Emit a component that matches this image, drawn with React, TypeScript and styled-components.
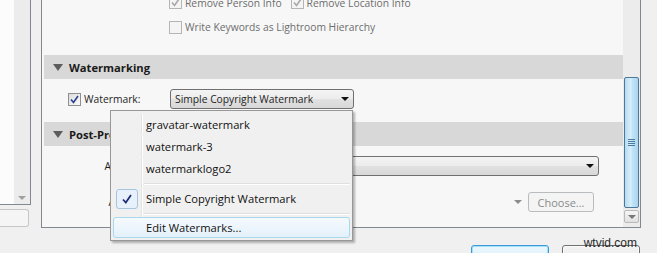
import styled, { createGlobalStyle } from 'styled-components';

const GlobalStyle = createGlobalStyle`
  html, body {
    margin: 0;
    padding: 0;
    background: #f0f0f0;
  }
  body {
    font-family: 'Open Sans', 'Noto Sans', 'DejaVu Sans', sans-serif;
    font-size: 10.3px;
    color: #1e1e1e;
  }
`;

const StyledPage = styled.div`
  position: relative;
  width: 657px;
  height: 253px;
  overflow: hidden;
  background: #f0f0f0;
`;

const StyledTopRow = styled.div`
  display: flex;
  height: 228px;
`;

const StyledLeftColumn = styled.div`
  display: flex;
  flex-direction: column;
  gap: 4px;
  width: 31px;
  height: 227px;
`;

const StyledLeftList = styled.div`
  flex: 1;
  display: flex;
  border-right: 1px solid #828790;
  border-bottom: 1px solid #828790;
  background: #fcfcfc;
`;

const StyledLeftListBody = styled.div`
  flex: 1;
`;

const StyledLeftListScroll = styled.div`
  width: 16px;
  display: flex;
  flex-direction: column;
  justify-content: flex-end;
  align-items: center;
  padding-bottom: 4px;
  background: #ececec;
`;

const StyledSmallArrow = styled.span<{ $color?: string }>`
  width: 0;
  height: 0;
  border-left: 4px solid transparent;
  border-right: 4px solid transparent;
  border-top: 4px solid ${({ $color }) => $color ?? '#9a9a9a'};
`;

const StyledLeftField = styled.div`
  height: 18px;
  width: 29px;
  box-sizing: border-box;
  border: 1px solid #c6c6c6;
  border-left: none;
  border-radius: 0 3px 3px 0;
  background: #f5f5f5;
`;

const StyledMainPanel = styled.div`
  display: flex;
  width: 600px;
  height: 228px;
  margin-left: 10px;
  box-sizing: border-box;
  border: 1px solid #828790;
  border-top: none;
  background: #f7f7f7;
`;

const StyledContent = styled.div`
  flex: 1;
  display: flex;
  flex-direction: column;
  padding-left: 2px;
  overflow: hidden;
`;

const StyledOptionRow = styled.div<{ $height: number; $offset?: number }>`
  display: flex;
  align-items: center;
  gap: 9px;
  height: ${({ $height }) => $height}px;
  margin-top: ${({ $offset }) => $offset ?? 0}px;
  padding-left: 125px;
  flex-shrink: 0;
`;

const StyledCheckLabel = styled.label<{ $disabled?: boolean }>`
  display: flex;
  align-items: center;
  gap: 3px;
  color: ${({ $disabled }) => ($disabled ? '#6d6d6d' : '#1e1e1e')};
  white-space: nowrap;
`;

const StyledCheckBox = styled.span<{ $disabled?: boolean }>`
  display: inline-flex;
  align-items: center;
  justify-content: center;
  width: 13px;
  height: 13px;
  box-sizing: border-box;
  border: 1px solid ${({ $disabled }) => ($disabled ? '#b5b5b5' : '#8e8f8f')};
  background: ${({ $disabled }) =>
    $disabled ? '#f4f4f4' : 'linear-gradient(135deg, #dcdcdc, #fbfbfb)'};
  flex-shrink: 0;
`;

const StyledSectionHeader = styled.div<{ $offset: number }>`
  display: flex;
  align-items: center;
  gap: 6px;
  height: 24px;
  margin-top: ${({ $offset }) => $offset}px;
  padding-left: 9px;
  background: #d8d8d8;
  font-size: 11.2px;
  font-weight: 700;
  color: #1a1a1a;
  flex-shrink: 0;
`;

const StyledDisclosure = styled.span`
  width: 0;
  height: 0;
  border-left: 5px solid transparent;
  border-right: 5px solid transparent;
  border-top: 7px solid #5c5c5c;
`;

const StyledFieldRow = styled.div<{ $offset: number }>`
  display: grid;
  grid-template-columns: 121px 1fr;
  column-gap: 5px;
  align-items: center;
  height: 20px;
  margin-top: ${({ $offset }) => $offset}px;
  padding-right: 24px;
  flex-shrink: 0;
`;

const StyledFieldLabel = styled.span`
  justify-self: end;
  white-space: nowrap;
`;

const StyledCheckCell = styled.div`
  justify-self: start;
  padding-left: 24px;
`;

const StyledSelect = styled.div<{ $width?: number }>`
  display: flex;
  align-items: center;
  justify-content: space-between;
  width: ${({ $width }) => ($width ? `${$width}px` : 'auto')};
  height: 20px;
  box-sizing: border-box;
  padding: 0 4px 0 4px;
  border: 1px solid #707070;
  border-radius: 3px;
  background: linear-gradient(#f4f4f4, #ececec 50%, #e1e1e1 51%, #d8d8d8);
  white-space: nowrap;
`;

const StyledEndCell = styled.div`
  display: flex;
  align-items: center;
  justify-content: flex-end;
  gap: 6px;
  padding-right: 5px;
`;

const StyledDisabledButton = styled.div`
  display: flex;
  align-items: center;
  justify-content: center;
  width: 66px;
  height: 20px;
  box-sizing: border-box;
  border: 1px solid #b8bcbf;
  border-radius: 3px;
  background: #f4f4f4;
  color: #8b8b8b;
  font-size: 11px;
`;

const StyledScrollbar = styled.div`
  width: 17px;
  display: flex;
  flex-direction: column;
  justify-content: flex-end;
  align-items: center;
  padding-bottom: 4px;
  background: #ececec;
`;

const StyledThumb = styled.div`
  display: flex;
  flex-direction: column;
  align-items: center;
  justify-content: center;
  gap: 1px;
  width: 15px;
  height: 131px;
  margin-bottom: 2px;
  box-sizing: border-box;
  border: 1px solid #4f7797;
  border-radius: 2px;
  background: linear-gradient(90deg, #b6dcf3, #d9effb 45%, #c3e4f7 55%, #a9d5f0);
`;

const StyledGrip = styled.span`
  width: 7px;
  height: 1px;
  background: #4a7aa0;
`;

const StyledScrollButton = styled.div`
  display: flex;
  align-items: center;
  justify-content: center;
  width: 15px;
  height: 13px;
  box-sizing: border-box;
  border: 1px solid #b9b9b9;
  border-radius: 2px;
  background: linear-gradient(#f6f6f6, #e0e0e0);
`;

const StyledBottomRow = styled.div`
  display: flex;
  justify-content: flex-end;
  gap: 13px;
  padding: 17px 17px 0 0;
`;

const StyledDialogButton = styled.div<{ $focused?: boolean }>`
  width: 78px;
  height: 23px;
  box-sizing: border-box;
  border: 1px solid ${({ $focused }) => ($focused ? '#3c9ad8' : '#707070')};
  border-radius: 3px;
  background: ${({ $focused }) =>
    $focused ? 'linear-gradient(#eaf6fd, #d9f0fc)' : 'linear-gradient(#f2f2f2, #ebebeb)'};
  box-shadow: ${({ $focused }) => ($focused ? 'inset 0 0 0 1px #a6e0f8' : 'inset 0 0 0 1px #fcfcfc')};
`;

const StyledSiteMark = styled.span`
  position: absolute;
  right: 20px;
  top: 236px;
  font-family: 'Liberation Sans', Arial, sans-serif;
  font-size: 12px;
  color: #2a2a2a;
`;

const StyledMenu = styled.div`
  position: absolute;
  left: 110px;
  top: 110px;
  width: 243px;
  box-sizing: border-box;
  padding: 2px;
  border: 1px solid #979797;
  background: #f0f0f0;
  box-shadow: 2px 2px 2px rgba(0, 0, 0, 0.28);
  font-size: 11.2px;
  color: #111;
`;

const StyledMenuItem = styled.div<{ $highlighted?: boolean; $height: number }>`
  display: flex;
  align-items: center;
  height: ${({ $height }) => $height}px;
  box-sizing: border-box;
  border: 1px solid ${({ $highlighted }) => ($highlighted ? '#a8d8eb' : 'transparent')};
  border-radius: 3px;
  background: ${({ $highlighted }) =>
    $highlighted ? 'linear-gradient(#f5fafd, #e4f1fb)' : 'transparent'};
`;

const StyledGutter = styled.div<{ $hidden?: boolean }>`
  display: flex;
  align-items: center;
  justify-content: center;
  align-self: stretch;
  width: 27px;
  margin-right: 4px;
  border-right: 1px solid ${({ $hidden }) => ($hidden ? 'transparent' : '#e2e3e3')};
  box-shadow: ${({ $hidden }) => ($hidden ? 'none' : '1px 0 0 #ffffff')};
`;

const StyledCheckMark = styled.span`
  display: flex;
  align-items: center;
  justify-content: center;
  width: 22px;
  height: 20px;
  margin-left: -1px;
  box-sizing: border-box;
  border: 1px solid #a4c6e0;
  border-radius: 3px;
  background: #e8f1fb;
`;

const StyledMenuSeparator = styled.div<{ $height: number }>`
  display: flex;
  align-items: center;
  height: ${({ $height }) => $height}px;
`;

const StyledMenuGutterSpace = styled.div`
  align-self: stretch;
  width: 28px;
  border-right: 1px solid #e2e3e3;
  box-shadow: 1px 0 0 #ffffff;
`;

const StyledMenuLine = styled.div`
  flex: 1;
  height: 1px;
  margin-left: 2px;
  background: #e0e0e0;
  box-shadow: 0 1px 0 #ffffff;
`;

const CheckBox = ({ disabled, checked }: { disabled?: boolean; checked?: boolean }) => (
  <StyledCheckBox $disabled={disabled}>
    {checked && (
      <svg width="9" height="9" viewBox="0 0 9 9">
        <path
          d="M1 4.5 L3.5 7.5 L8 1"
          fill="none"
          stroke={disabled ? '#a8a8a8' : '#2a3f8f'}
          strokeWidth="1.6"
        />
      </svg>
    )}
  </StyledCheckBox>
);

const menuItems = ['gravatar-watermark', 'watermark-3', 'watermarklogo2'];

const WatermarkMenu = () => (
  <StyledMenu>
    {menuItems.map((item) => (
      <StyledMenuItem key={item} $height={22}>
        <StyledGutter />
        {item}
      </StyledMenuItem>
    ))}
    <StyledMenuSeparator $height={9}>
      <StyledMenuGutterSpace />
      <StyledMenuLine />
    </StyledMenuSeparator>
    <StyledMenuItem $height={21}>
      <StyledGutter>
        <StyledCheckMark>
          <svg width="12" height="12" viewBox="0 0 12 12">
            <path d="M2 6.5 L4.8 9.5 L10 2" fill="none" stroke="#1f2d7b" strokeWidth="1.8" />
          </svg>
        </StyledCheckMark>
      </StyledGutter>
      Simple Copyright Watermark
    </StyledMenuItem>
    <StyledMenuSeparator $height={8}>
      <StyledMenuGutterSpace />
      <StyledMenuLine />
    </StyledMenuSeparator>
    <StyledMenuItem $height={21} $highlighted>
      <StyledGutter $hidden />
      Edit Watermarks...
    </StyledMenuItem>
  </StyledMenu>
);

export default function App() {
  return (
    <StyledPage>
      <GlobalStyle />
      <StyledTopRow>
        <StyledLeftColumn>
          <StyledLeftList>
            <StyledLeftListBody />
            <StyledLeftListScroll>
              <StyledSmallArrow $color="#a0a0a0" />
            </StyledLeftListScroll>
          </StyledLeftList>
          <StyledLeftField />
        </StyledLeftColumn>

        <StyledMainPanel>
          <StyledContent>
            <StyledOptionRow $height={25} $offset={-10}>
              <StyledCheckLabel $disabled>
                <CheckBox disabled checked />
                Remove Person Info
              </StyledCheckLabel>
              <StyledCheckLabel $disabled>
                <CheckBox disabled checked />
                Remove Location Info
              </StyledCheckLabel>
            </StyledOptionRow>
            <StyledOptionRow $height={24}>
              <StyledCheckLabel $disabled>
                <CheckBox disabled />
                Write Keywords as Lightroom Hierarchy
              </StyledCheckLabel>
            </StyledOptionRow>

            <StyledSectionHeader $offset={16}>
              <StyledDisclosure />
              Watermarking
            </StyledSectionHeader>
            <StyledFieldRow $offset={10}>
              <StyledCheckCell>
                <StyledCheckLabel>
                  <CheckBox checked />
                  Watermark:
                </StyledCheckLabel>
              </StyledCheckCell>
              <StyledSelect $width={184}>
                Simple Copyright Watermark
                <StyledSmallArrow $color="#111" />
              </StyledSelect>
            </StyledFieldRow>

            <StyledSectionHeader $offset={13}>
              <StyledDisclosure />
              Post-Processing
            </StyledSectionHeader>
            <StyledFieldRow $offset={10}>
              <StyledFieldLabel>After Export:</StyledFieldLabel>
              <StyledSelect>
                Do nothing
                <StyledSmallArrow $color="#111" />
              </StyledSelect>
            </StyledFieldRow>
            <StyledFieldRow $offset={16}>
              <StyledFieldLabel>Application:</StyledFieldLabel>
              <StyledEndCell>
                <StyledSmallArrow $color="#8c8c8c" />
                <StyledDisabledButton>Choose...</StyledDisabledButton>
              </StyledEndCell>
            </StyledFieldRow>
          </StyledContent>

          <StyledScrollbar>
            <StyledThumb>
              <StyledGrip />
              <StyledGrip />
              <StyledGrip />
              <StyledGrip />
            </StyledThumb>
            <StyledScrollButton>
              <StyledSmallArrow $color="#777" />
            </StyledScrollButton>
          </StyledScrollbar>
        </StyledMainPanel>
      </StyledTopRow>

      <StyledBottomRow>
        <StyledDialogButton $focused />
        <StyledDialogButton />
      </StyledBottomRow>

      <StyledSiteMark>wtvid.com</StyledSiteMark>
      <WatermarkMenu />
    </StyledPage>
  );
}
